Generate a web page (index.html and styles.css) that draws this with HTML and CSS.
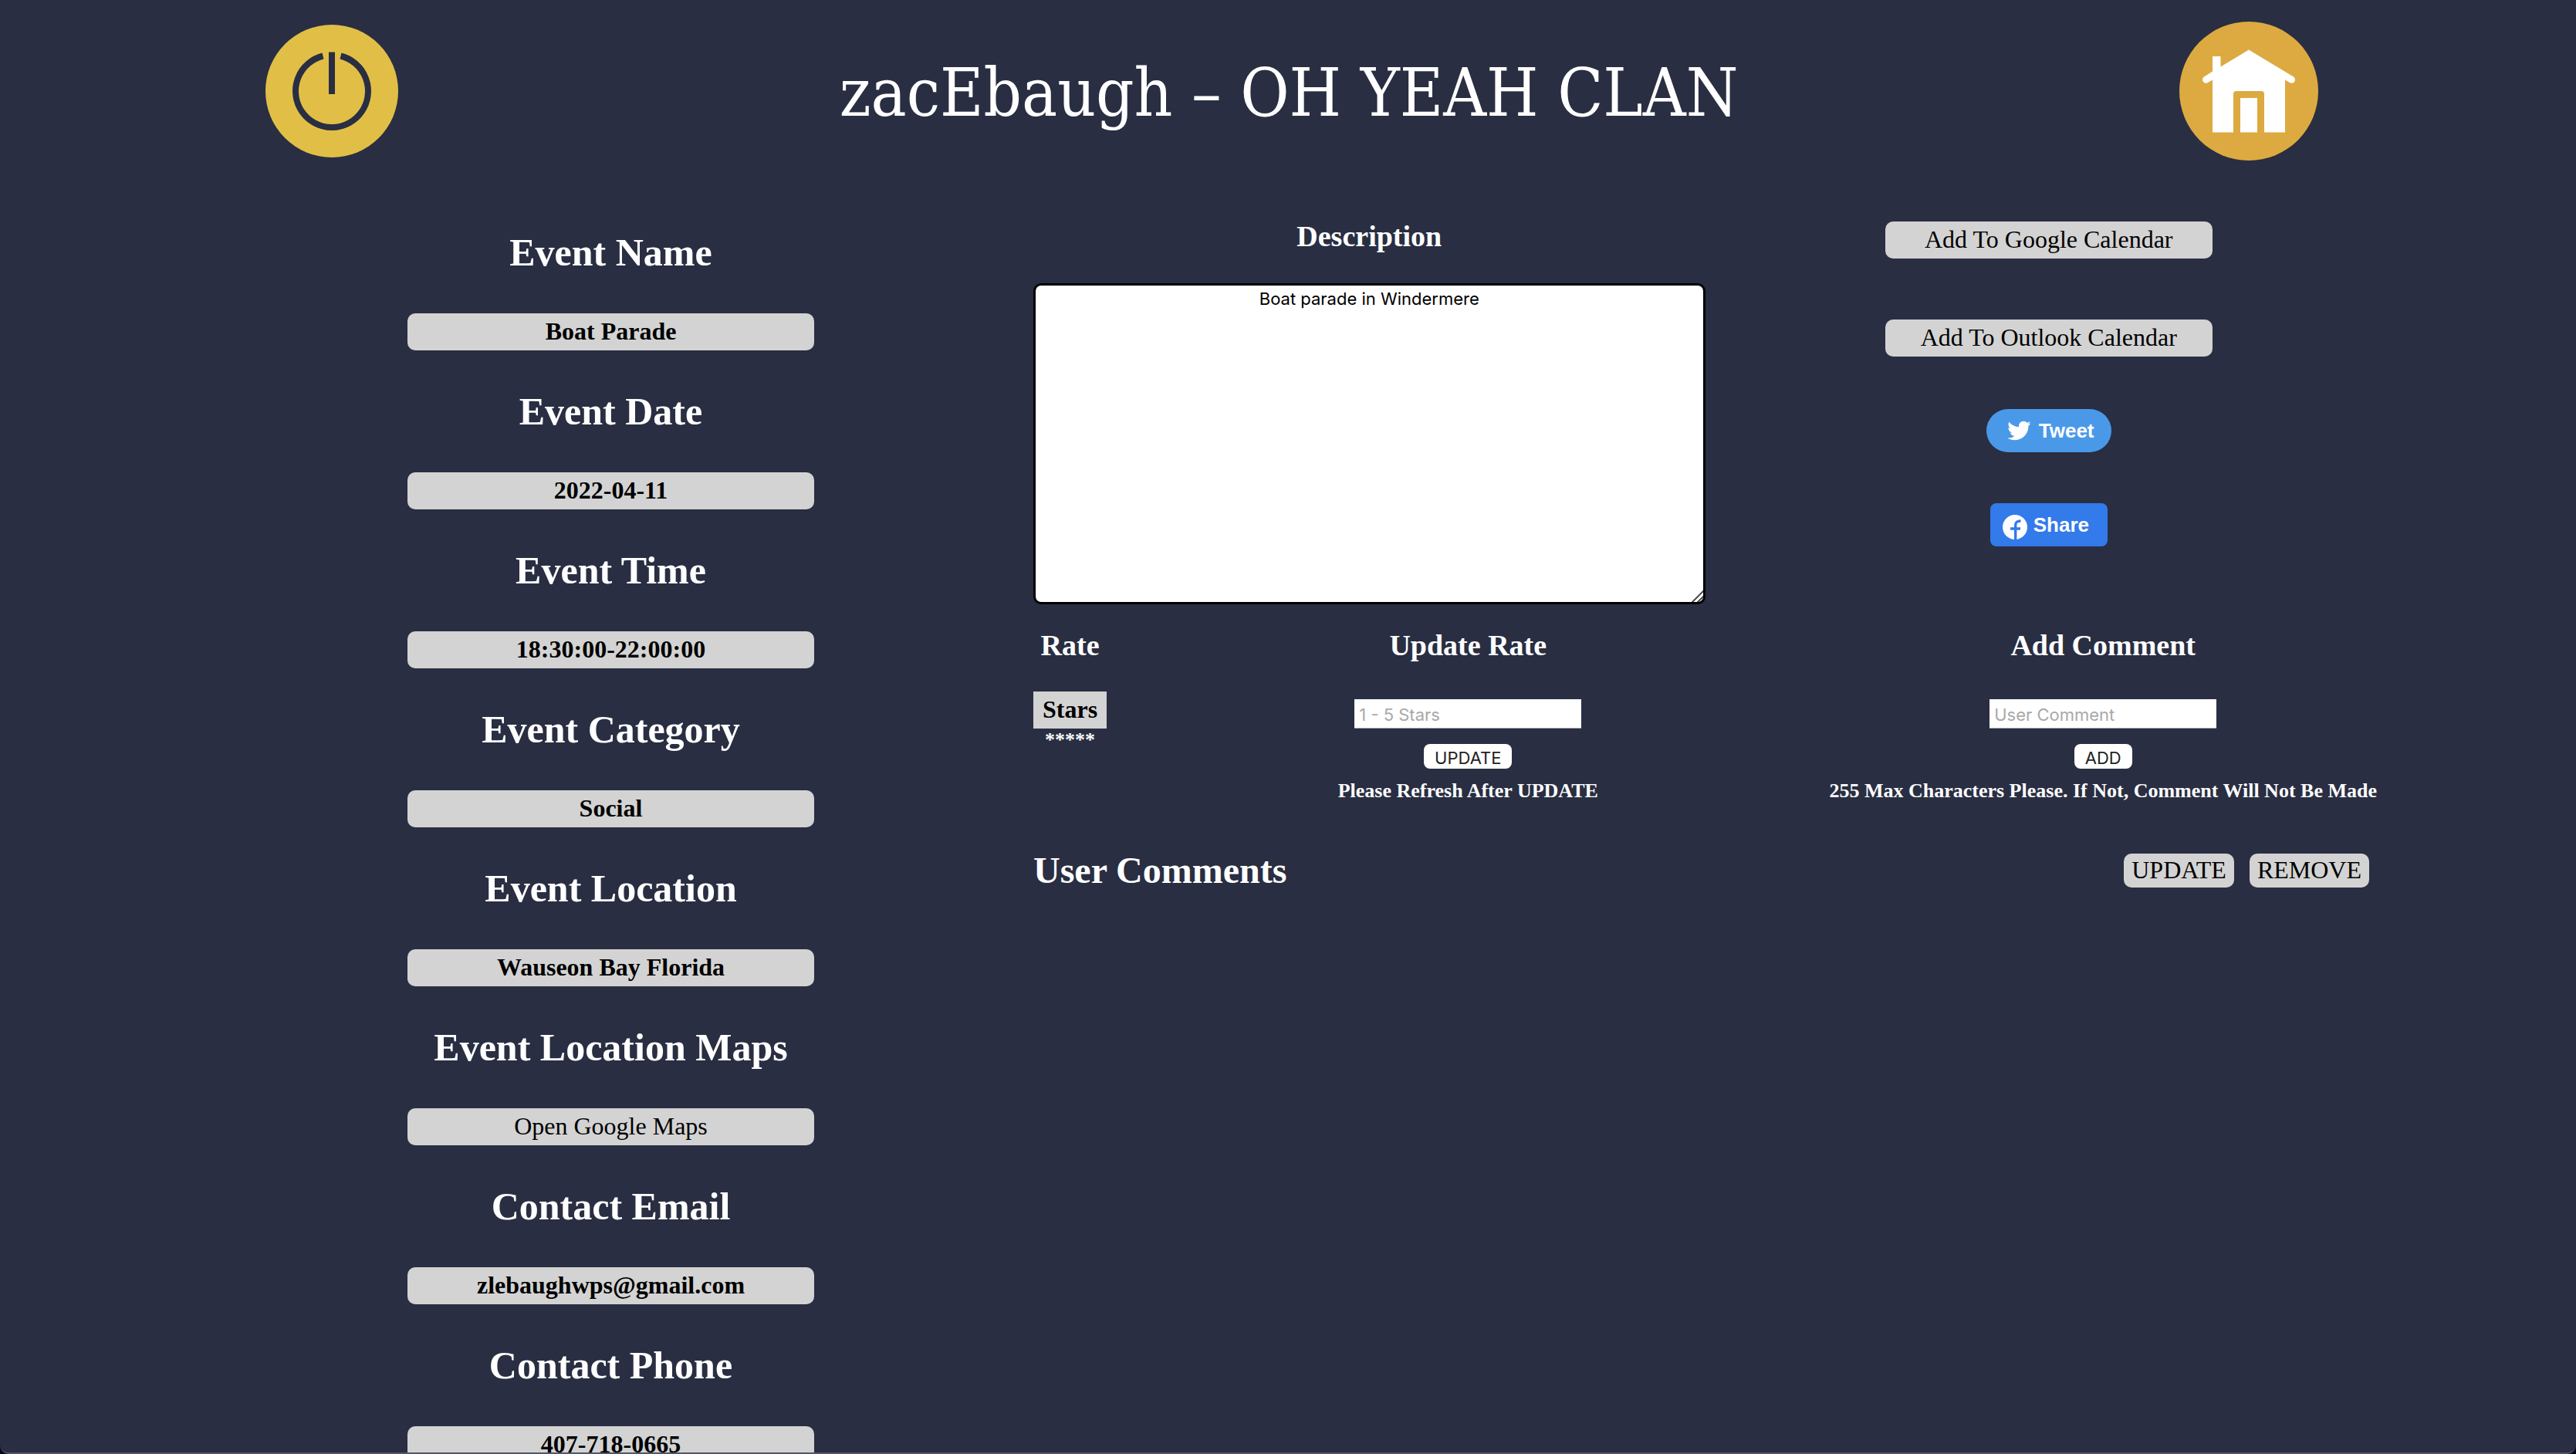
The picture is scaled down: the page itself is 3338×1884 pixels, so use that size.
FILE: index.html
```html
<!DOCTYPE html>
<html lang="en">
<head>
<meta charset="utf-8">
<title>zacEbaugh – OH YEAH CLAN</title>
<link rel="stylesheet" href="styles.css">
</head>
<body>
<div class="page">
  <header class="header">
    <a class="logout" href="#logout" aria-label="Log out">
      <svg width="172" height="172" viewBox="0 0 172 172">
        <circle cx="86" cy="86" r="86" fill="#e1bf46"/>
        <path d="M74.500 40.500A47 47 0 1 0 97.500 40.500" fill="none" stroke="#292e42" stroke-width="8"/>
        <path d="M86 35.500V90" stroke="#292e42" stroke-width="8"/>
      </svg>
    </a>
    <h1 class="title">zacEbaugh – OH YEAH CLAN</h1>
    <a class="home" href="#home" aria-label="Home">
      <svg width="180" height="180" viewBox="0 0 180 180">
        <circle cx="90" cy="90" r="90" fill="#dcaa40"/>
        <path d="M90 36.500L148 71.500A4.500 4.500 0 0 1 143 79L137 75.500V143.500H110V94Q110 90 106 90H74Q70 90 70 94V143.500H43V75.500L37 79A4.500 4.500 0 0 1 32 71.500L43 64.500V45H53.500V58.500Z" fill="#fff"/>
        <path d="M79 99H101V143.500H79Z" fill="#fff"/>
      </svg>
    </a>
  </header>

  <main class="main">
    <section class="details">
      <h2>Event Name</h2>
      <p class="value">Boat Parade</p>
      <h2>Event Date</h2>
      <p class="value">2022-04-11</p>
      <h2>Event Time</h2>
      <p class="value">18:30:00-22:00:00</p>
      <h2>Event Category</h2>
      <p class="value">Social</p>
      <h2>Event Location</h2>
      <p class="value">Wauseon Bay Florida</p>
      <h2>Event Location Maps</h2>
      <a class="value link" href="#maps">Open Google Maps</a>
      <h2>Contact Email</h2>
      <p class="value">zlebaughwps@gmail.com</p>
      <h2>Contact Phone</h2>
      <p class="value">407-718-0665</p>
    </section>

    <div class="content">
      <section class="top">
        <div class="description">
          <h3><label for="description">Description</label></h3>
          <textarea id="description">Boat parade in Windermere</textarea>
        </div>
        <div class="share">
          <a class="calendar" href="#google">Add To Google Calendar</a>
          <a class="calendar" href="#outlook">Add To Outlook Calendar</a>
          <a class="social tweet" href="#tweet">
            <svg width="32" height="32" viewBox="0 0 24 24"><path fill="#fff" d="M23.643 4.937c-.835.37-1.732.62-2.675.733.962-.576 1.7-1.490 2.048-2.578-.9.534-1.897.922-2.958 1.130-.85-.904-2.060-1.470-3.400-1.470-2.572 0-4.658 2.086-4.658 4.660 0 .364.042.718.120 1.060-3.873-.195-7.304-2.050-9.602-4.868-.4.690-.630 1.490-.630 2.342 0 1.616.823 3.043 2.072 3.878-.764-.025-1.482-.234-2.110-.583v.060c0 2.257 1.605 4.140 3.737 4.568-.392.106-.803.162-1.227.162-.3 0-.593-.028-.877-.082.593 1.850 2.313 3.198 4.352 3.234-1.595 1.250-3.604 1.995-5.786 1.995-.376 0-.747-.022-1.112-.065 2.062 1.323 4.510 2.093 7.140 2.093 8.570 0 13.255-7.098 13.255-13.254 0-.200-.005-.402-.014-.602.910-.658 1.700-1.477 2.323-2.410z"/></svg>
            <span>Tweet</span>
          </a>
          <a class="social facebook" href="#share">
            <svg width="32" height="38" viewBox="0 0 32 38"><circle cx="16" cy="22" r="16" fill="#fff"/><path fill="none" stroke="#337aea" stroke-width="3.400" d="M16.700 38V19Q16.700 14 23.500 14M10 24H23"/></svg>
            <span>Share</span>
          </a>
        </div>
      </section>

      <section class="forms">
        <div class="field">
          <h3>Rate</h3>
          <p class="stars-label">Stars</p>
          <p class="note">*****</p>
        </div>
        <form class="field">
          <h3><label for="rate">Update Rate</label></h3>
          <input class="entry" id="rate" type="text" placeholder="1 - 5 Stars">
          <button class="submit" type="button">UPDATE</button>
          <p class="note">Please Refresh After UPDATE</p>
        </form>
        <form class="field">
          <h3><label for="comment">Add Comment</label></h3>
          <input class="entry" id="comment" type="text" placeholder="User Comment">
          <button class="submit" type="button">ADD</button>
          <p class="note">255 Max Characters Please. If Not, Comment Will Not Be Made</p>
        </form>
      </section>

      <section class="comments">
        <h2>User Comments</h2>
        <div class="actions">
          <button class="action" type="button">UPDATE</button>
          <button class="action" type="button">REMOVE</button>
        </div>
      </section>
    </div>
  </main>
</div>
</body>
</html>
```

FILE: styles.css
```css
* {
  box-sizing: border-box;
}

body {
  margin: 0;
  background: #0b0624;
  color: #fff;
  font-family: "Liberation Serif", "Times New Roman", serif;
}

.page {
  height: 100vh;
  overflow-y: auto;
  scrollbar-width: none;
  border-bottom: 2px solid #53566a;
  border-radius: 0 0 12px 12px;
  background: #292e42;
}

h1, h2, h3, p {
  margin: 0;
}

h2 {
  font-size: 50px;
  line-height: 58px;
}

h3 {
  font-size: 38px;
  line-height: 44px;
}

a {
  color: inherit;
  text-decoration: none;
}

svg {
  display: block;
}

/* Header */
.header {
  display: flex;
  justify-content: space-between;
  align-items: center;
  height: 236px;
  padding: 0 10% 0 344px;
}

.title {
  padding-top: 4px;
  font-family: "DejaVu Serif Condensed", "DejaVu Serif", serif;
  font-size: 86px;
  font-weight: 400;
  white-space: nowrap;
}

/* Two main columns */
.main {
  display: grid;
  grid-template-columns: minmax(0, 527fr) minmax(0, 1741fr);
  column-gap: 284px;
  padding: 0 258px 100px 528px;
}

.details {
  padding-top: 12px;
  text-align: center;
}

.details h2 {
  margin: 50px 0;
}

.value {
  display: block;
  padding-bottom: 2px;
  border-radius: 10px;
  background: lightgray;
  color: #000;
  font-size: 32px;
  font-weight: 700;
  line-height: 46px;
}

.value.link {
  font-weight: 400;
}

.content {
  padding-top: 48px;
}

.top {
  display: grid;
  grid-template-columns: 1fr 1fr;
}

.description {
  display: flex;
  flex-direction: column;
  gap: 39px;
  text-align: center;
}

textarea {
  display: block;
  width: 100%;
  height: 416px;
  padding: 4px 6px;
  border: 3px solid #000;
  border-radius: 10px;
  background: #fff;
  color: #000;
  font-family: Inter, sans-serif;
  font-size: 22px;
  line-height: 26px;
  text-align: center;
}

textarea::-webkit-resizer {
  background: linear-gradient(135deg, transparent 47%, #555 47% 57%, transparent 57% 72%, #555 72% 82%, transparent 82%);
}

.share {
  display: flex;
  flex-direction: column;
  align-items: center;
  padding: 3px 0 0 20px;
}

.calendar {
  width: 424px;
  margin-bottom: 79px;
  padding-bottom: 2px;
  border-radius: 10px;
  background: lightgray;
  color: #000;
  font-size: 32px;
  line-height: 46px;
  text-align: center;
}

.calendar + .social {
  margin-top: -11px;
}

.social {
  display: flex;
  align-items: center;
  height: 56px;
  font: 700 26px "Liberation Sans", Arial, sans-serif;
}

.tweet {
  gap: 10px;
  width: 162px;
  margin-bottom: 66px;
  padding-left: 26px;
  border-radius: 28px;
  background: #4a99e9;
}

.facebook {
  gap: 8px;
  width: 152px;
  padding-left: 16px;
  border-radius: 8px;
  background: #337aea;
}

/* Rating and comment forms */
.forms {
  display: flex;
  justify-content: space-between;
  margin-top: 31px;
}

.field {
  display: flex;
  flex-direction: column;
  align-items: center;
}

.stars-label {
  margin-top: 38px;
  padding: 0 12px 2px;
  background: lightgray;
  color: #000;
  font-size: 32px;
  font-weight: 700;
  line-height: 46px;
}

.note {
  font-size: 26px;
  font-weight: 700;
  line-height: 30px;
  white-space: nowrap;
}

.entry {
  width: 294px;
  height: 38px;
  margin-top: 48px;
  padding: 2px 6px 0;
  border: 0;
  border-bottom: 1px solid #aaa;
  background: #fff;
  color: #000;
  font-family: Inter, sans-serif;
  font-size: 22px;
}

.entry::placeholder {
  color: #a9a9a9;
}

.submit {
  height: 32px;
  margin: 20px 0 14px;
  padding: 4px 14px 0;
  border: 0;
  border-radius: 8px;
  background: #fff;
  color: #222;
  font-family: Inter, sans-serif;
  font-size: 22px;
  line-height: 28px;
}

/* Comments */
.comments {
  display: flex;
  justify-content: space-between;
  align-items: center;
  margin-top: 59px;
}

.comments h2 {
  font-size: 48px;
}

.actions {
  display: flex;
  gap: 20px;
  padding-right: 10px;
}

.action {
  height: 44px;
  padding: 0 10px 2px;
  border: 0;
  border-radius: 10px;
  background: lightgray;
  color: #000;
  font-family: inherit;
  font-size: 32px;
}
```
